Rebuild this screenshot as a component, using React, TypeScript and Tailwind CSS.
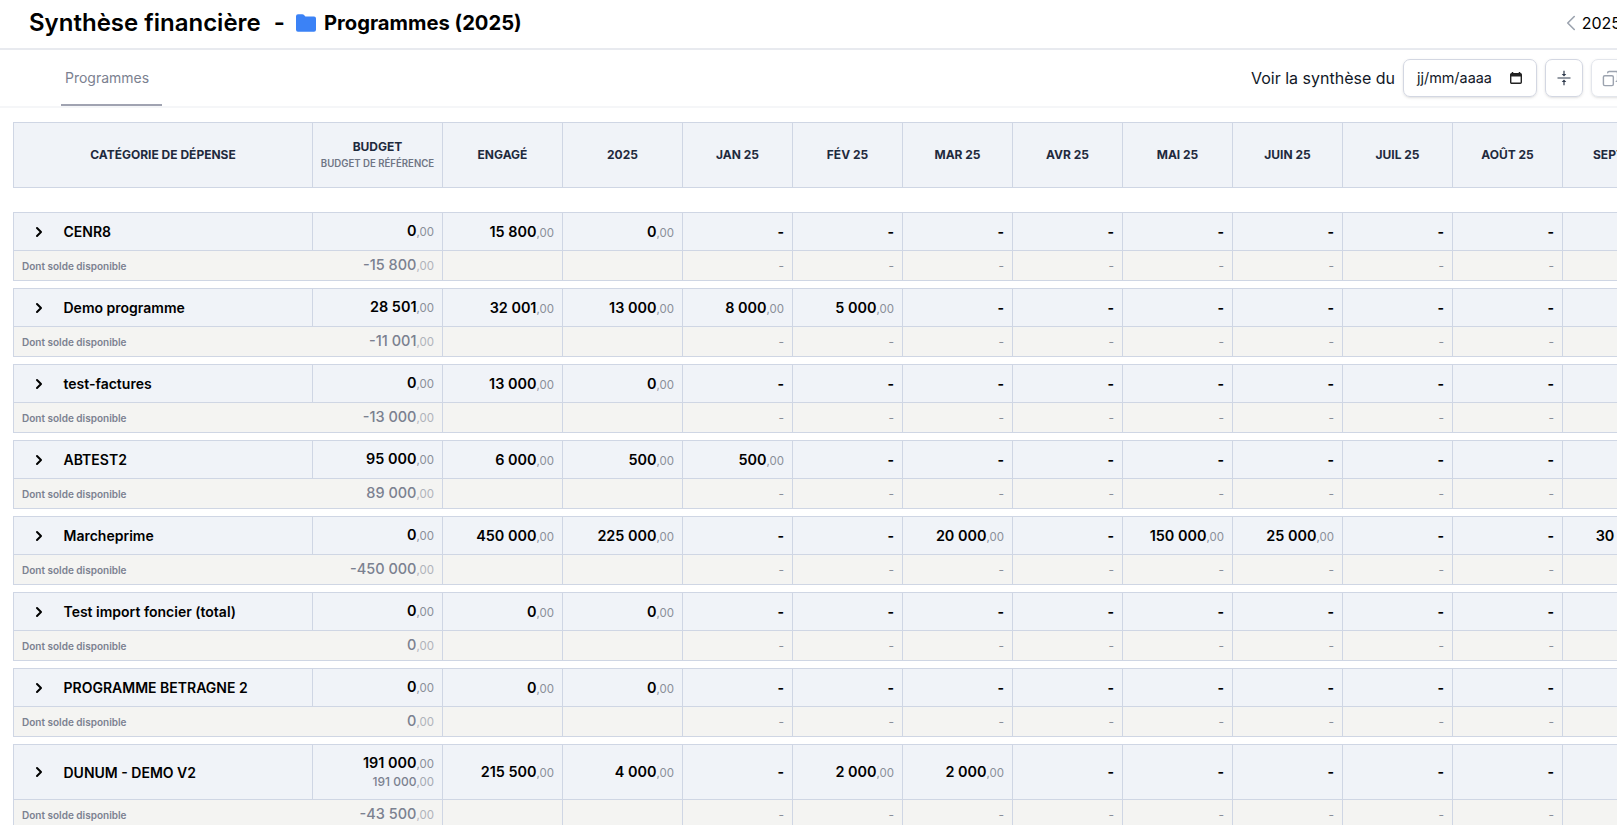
import React from "react";
import { ChevronRight, ChevronLeft, Copy } from "lucide-react";

const months = ["JAN 25","FÉV 25","MAR 25","AVR 25","MAI 25","JUIN 25","JUIL 25","AOÛT 25","SEPT 25","OCT 25","NOV 25","DÉC 25"];

type Row = { name: string; budget: string; ref?: string; engage: string; y: string; solde: string; m: Record<number,string> };
const rows: Row[] = [
  { name: "CENR8", budget: "0", engage: "15 800", y: "0", solde: "-15 800", m: {} },
  { name: "Demo programme", budget: "28 501", engage: "32 001", y: "13 000", solde: "-11 001", m: {0:"8 000",1:"5 000"} },
  { name: "test-factures", budget: "0", engage: "13 000", y: "0", solde: "-13 000", m: {} },
  { name: "ABTEST2", budget: "95 000", engage: "6 000", y: "500", solde: "89 000", m: {0:"500"} },
  { name: "Marcheprime", budget: "0", engage: "450 000", y: "225 000", solde: "-450 000", m: {2:"20 000",4:"150 000",5:"25 000",8:"30 000"} },
  { name: "Test import foncier (total)", budget: "0", engage: "0", y: "0", solde: "0", m: {} },
  { name: "PROGRAMME BETRAGNE 2", budget: "0", engage: "0", y: "0", solde: "0", m: {} },
  { name: "DUNUM - DEMO V2", budget: "191 000", ref: "191 000", engage: "215 500", y: "4 000", solde: "-43 500", m: {1:"2 000",2:"2 000"} },
];

const Amount = ({ v }: { v: string }) => (
  <span className="text-[14.4px] font-semibold text-black">{v}<span className="text-[11.5px] font-normal text-[#8a8f98]">,00</span></span>
);

const Th = ({ children }: { children: React.ReactNode }) => (
  <th className="border border-[#cfd6e4] bg-[#f0f3f8] text-center align-middle text-[12px] font-bold text-[#1f2a3d] uppercase">{children}</th>
);

const Td = ({ v }: { v?: string }) => (
  <td className="border border-[#cfd6e4] bg-[#f0f3f8] pr-[8px] pb-[2px] text-right align-middle">
    {v ? <Amount v={v} /> : <span className="text-[14px] font-bold text-black">-</span>}
  </td>
);

const Sub = ({ dash = true }: { dash?: boolean }) => (
  <td className="border border-[#cfd6e4] bg-[#f4f4f2] pr-[8px] pt-[1px] text-right align-middle text-[12px] text-[#8a8f98]">{dash ? "-" : ""}</td>
);

const Spacer = ({ h }: { h: string }) => (
  <tr className={h}><td colSpan={16} className="border-0 p-0" /></tr>
);

export default function App() {
  return (
    <div className="h-screen w-screen overflow-hidden bg-white font-['Inter',sans-serif]">
      <div className="w-[1800px]">
        <header className="flex h-[50px] items-center justify-between border-b-2 border-[#e8eaef] pb-[2px] pl-[29px] pr-[179px]">
          <div className="flex items-center">
            <h1 className="text-[24px] leading-none font-semibold text-black">Synthèse financière</h1>
            <span className="ml-[13px] text-[24px] leading-none font-semibold text-black">-</span>
            <svg className="ml-[11px] h-[18px] w-[20px]" viewBox="0 0 20 18" fill="#3b82f6"><path d="M0 2.200A2 2 0 0 1 2 .2h4.300c.6 0 1.100.2 1.500.6L9.400 2.400H18a2 2 0 0 1 2 2v11.400a2 2 0 0 1-2 2H2a2 2 0 0 1-2-2z" /></svg>
            <span className="ml-[8px] text-[20.2px] leading-none font-bold text-black">Programmes (2025)</span>
          </div>
          <div className="flex items-center text-[16px] text-black">
            <ChevronLeft className="-mr-[2px] h-[26px] w-[26px] text-[#9ca3af]" strokeWidth={1.5} />
            <span>2025</span>
          </div>
        </header>
        <div className="flex h-[58px] items-center justify-between border-b-2 border-[#f5f6f8] pr-[171px]">
          <div className="ml-[61px] flex h-full items-end">
            <div className="flex h-full w-[101px] items-center border-b-2 border-[#a0a3b1] pl-[4px] pt-[1px] text-[14px] text-[#7b8190]">Programmes</div>
          </div>
          <div className="flex items-center">
            <span className="text-[16px] text-[#111827]">Voir la synthèse du</span>
            <div className="ml-[8px] flex h-[38px] w-[134px] items-center justify-between rounded-[7px] border border-[#d3d7e2] pl-[13px] pr-[13px] text-[14.4px] text-[#111827] shadow-sm">
              <span>jj/mm/aaaa</span>
              <svg width="14" height="14" viewBox="0 0 14 14" fill="none"><path d="M3.500 1v2M10.500 1v2" stroke="#222" strokeWidth="1.500"/><rect x="1.700" y="2.700" width="10.600" height="9.600" rx="1" stroke="#222" strokeWidth="1.400"/><rect x="1.700" y="2.700" width="10.600" height="2.800" fill="#222"/></svg>
            </div>
            <button className="ml-[8px] flex h-[38px] w-[38px] items-center justify-center rounded-[7px] border border-[#d3d7e2] shadow-sm">
              <svg width="14" height="16" viewBox="0 0 14 16" fill="#2f3a4c"><rect x="0.500" y="7.500" width="13" height="1"/><path d="M7 6.500 4.700 4h1.700V.8h1.200V4h1.700zM7 9.500 9.300 12H7.600v3.200H6.400V12H4.700z"/></svg>
            </button>
            <button className="ml-[8px] flex h-[38px] w-[38px] items-center justify-center rounded-[7px] border border-[#e3e6ec] shadow-sm">
              <Copy className="h-[17px] w-[17px] -scale-x-100 text-[#9ca3af]" strokeWidth={2} />
            </button>
          </div>
        </div>
        <div className="w-[2040px] pl-[13px] pt-[14px]">
          <table className="w-[1989px] table-fixed border-collapse">
            <colgroup>
              <col className="w-[299px]" /><col className="w-[130px]" /><col className="w-[120px]" /><col className="w-[120px]" />
              {months.map(m => <col key={m} className="w-[110px]" />)}
            </colgroup>
            <thead>
              <tr className="h-[65px]">
                <Th>Catégorie de dépense</Th>
                <Th>
                  <div>Budget</div>
                  <div className="mt-[1px] text-[9.65px] font-semibold text-[#6f7584]">Budget de référence</div>
                </Th>
                <Th>Engagé</Th>
                <Th>2025</Th>
                {months.map(m => <Th key={m}>{m}</Th>)}
              </tr>
            </thead>
            <tbody>
              <Spacer h="h-[25px]" />
              {rows.map((r, i) => (
                <React.Fragment key={r.name}>
                  <tr className={r.ref ? "h-[55px]" : "h-[38px]"}>
                    <td className="border border-[#cfd6e4] bg-[#f0f3f8] align-middle">
                      <div className="flex items-center">
                        <ChevronRight className="ml-[17px] h-[16px] w-[16px] text-black" strokeWidth={3} />
                        <span className="ml-[16.500px] text-[14px] font-semibold text-black">{r.name}</span>
                      </div>
                    </td>
                    <td className="border border-[#cfd6e4] bg-[#f0f3f8] pr-[8px] pb-[2px] text-right align-middle">
                      <div className="leading-[20px]"><Amount v={r.budget} /></div>
                      {r.ref && <div className="leading-[16px] text-[12px] font-medium text-[#7b8190]">{r.ref}<span className="text-[11.5px] font-normal text-[#a5a9b2]">,00</span></div>}
                    </td>
                    <Td v={r.engage} />
                    <Td v={r.y} />
                    {months.map((m, j) => <Td key={m} v={r.m[j]} />)}
                  </tr>
                  <tr className="h-[30px]">
                    <td colSpan={2} className="border border-[#cfd6e4] bg-[#f4f4f2] pr-[8px] pl-[8px] align-middle">
                      <div className="flex items-center justify-between">
                        <span className="pt-[2px] text-[10px] font-semibold text-[#7b8190]">Dont solde disponible</span>
                        <span className="pb-[1px] text-[14.5px] font-medium text-[#7b8190]">{r.solde}<span className="text-[11.5px] font-normal text-[#b0b3ba]">,00</span></span>
                      </div>
                    </td>
                    <Sub dash={false} />
                    <Sub dash={false} />
                    {months.map(m => <Sub key={m} />)}
                  </tr>
                  {i < rows.length - 1 && <Spacer h="h-[8px]" />}
                </React.Fragment>
              ))}
            </tbody>
          </table>
        </div>
      </div>
    </div>
  );
}
